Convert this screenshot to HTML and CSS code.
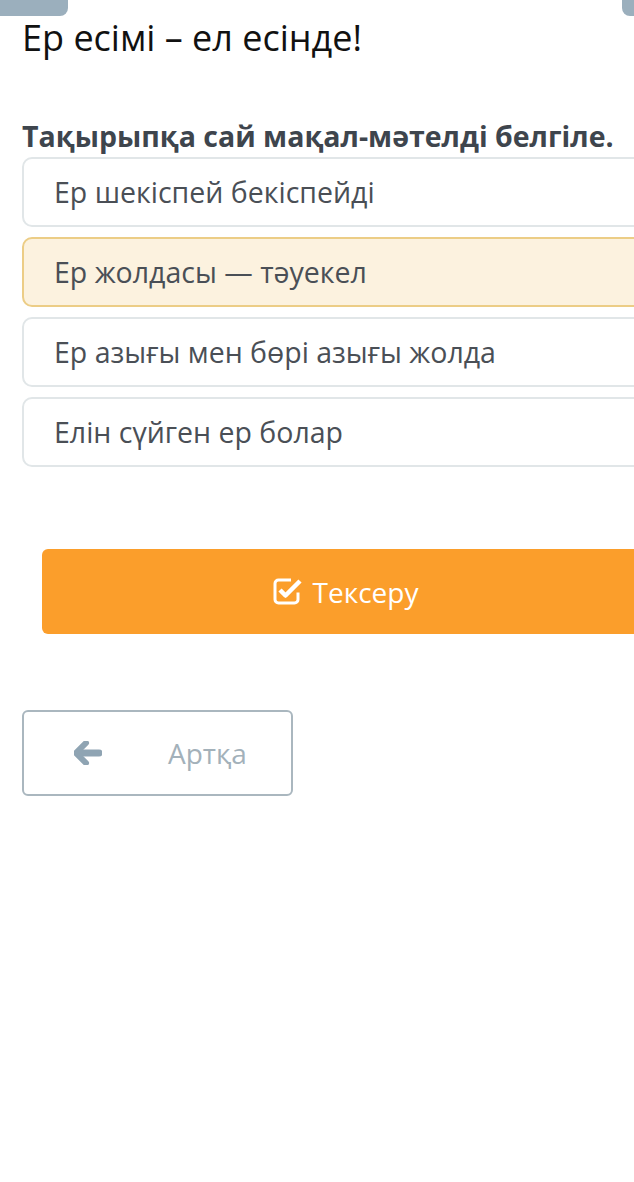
FILE: index.html
```html
<!DOCTYPE html>
<html lang="kk">
<head>
    <meta charset="UTF-8">
    <meta name="viewport" content="width=device-width, initial-scale=1.0">
    <title>Ер есімі – ел есінде!</title>
    <link rel="stylesheet" href="styles.css">
</head>
<body>
    <div class="top-tabs">
        <span class="tab tab-left"></span>
        <span class="tab tab-right"></span>
    </div>

    <div class="quiz">
        <h1 class="quiz-title">Ер есімі – ел есінде!</h1>

        <h2 class="question">Тақырыпқа сай мақал-мәтелді белгіле.</h2>

        <ul class="answers">
            <li class="answer">Ер шекіспей бекіспейді</li>
            <li class="answer selected">Ер жолдасы — тәуекел</li>
            <li class="answer">Ер азығы мен бөрі азығы жолда</li>
            <li class="answer">Елін сүйген ер болар</li>
        </ul>

        <button class="check-btn">
            <svg class="check-icon" width="30" height="30" viewBox="0 0 30 30">
                <path d="M19 4H6.5A3.5 3.5 0 0 0 3 7.5v16A3.5 3.5 0 0 0 6.5 27h16a3.5 3.5 0 0 0 3.5-3.5v-7" fill="none" stroke="#fff" stroke-width="3"/>
                <path d="M8 14l5.5 5.5L28 5" fill="none" stroke="#fff" stroke-width="4.5" stroke-linejoin="round"/>
            </svg>
            Тексеру
        </button>

        <button class="back-btn">
            <svg class="back-icon" width="28" height="24" viewBox="0 0 28 24">
                <path d="M12 2L2 12l10 10" fill="none" stroke="#8fa4b3" stroke-width="6" stroke-linecap="round" stroke-linejoin="round"/>
                <path d="M4 12h21" stroke="#8fa4b3" stroke-width="7" stroke-linecap="round"/>
            </svg>
            <span>Артқа</span>
        </button>
    </div>
</body>
</html>
```

FILE: styles.css
```css
body {
    margin: 0;
    background: #fff;
    font-family: "Open Sans", "Noto Sans", sans-serif;
    overflow: hidden;
}
.top-tabs {
    position: relative;
    height: 13px;
}
.tab {
    position: absolute;
    top: 0;
    height: 16px;
    background: #9bafbd;
}
.tab-left {
    left: 0;
    width: 68px;
    border-radius: 0 0 8px 0;
}
.tab-right {
    left: 622px;
    width: 12px;
    border-radius: 0 0 0 8px;
}
.quiz {
    padding-left: 22px;
    width: 612px;
    overflow-x: clip;
}
.quiz-title {
    margin: 0;
    font-size: 36px;
    font-weight: 400;
    line-height: 50px;
    color: #111;
    white-space: nowrap;
}
.question {
    margin: 55px 0 0;
    font-size: 28.5px;
    font-weight: 700;
    line-height: 36px;
    color: #3e454d;
    white-space: nowrap;
}
.answers {
    list-style: none;
    margin: 3px -40px 0 0;
    padding: 0;
    display: flex;
    flex-direction: column;
    gap: 10px;
}
.answer {
    height: 66px;
    display: flex;
    align-items: center;
    padding-left: 30px;
    border: 2px solid #e1e6e8;
    border-radius: 10px;
    font-size: 28.5px;
    color: #4a4f56;
}
.answer.selected {
    background: #fcf2df;
    border-color: #eccd86;
}
.check-btn {
    display: flex;
    align-items: center;
    justify-content: center;
    gap: 11px;
    margin: 82px -40px 0 20px;
    width: 632px;
    padding: 0 26px 0 0;
    height: 85px;
    border: none;
    border-radius: 6px;
    background: #fb9e2b;
    color: #fff;
    font-family: inherit;
    font-size: 28px;
    cursor: pointer;
}
.check-btn .check-icon {
    margin-bottom: 2px;
}
.back-btn {
    display: flex;
    align-items: center;
    gap: 66px;
    margin-top: 76px;
    width: 271px;
    height: 86px;
    padding: 0 0 0 50px;
    border: 2px solid #aab7bf;
    border-radius: 6px;
    background: #fff;
    color: #a3b1ba;
    font-family: inherit;
    font-size: 28px;
    cursor: pointer;
}
```
